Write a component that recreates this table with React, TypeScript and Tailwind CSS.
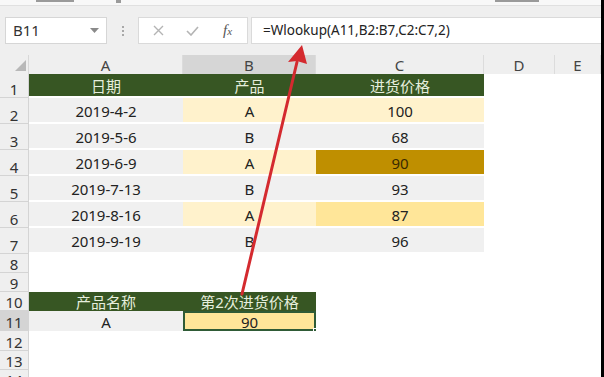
const font = "font-['Noto_Sans','Noto_Sans_CJK_SC',sans-serif]"

type Cell = { text?: string; bg?: string; color?: string }

const G = "bg-[#375623]"
const Y = "bg-[#fff2cc]"
const Y2 = "bg-[#ffe699]"
const GR = "bg-[#f0f0f0]"
const GOLD = "bg-[#bf8f00]"

const cols = [
    { name: "A", w: "w-[154px]" },
    { name: "B", w: "w-[133px]" },
    { name: "C", w: "w-[168px]" },
    { name: "D", w: "w-[71px]" },
    { name: "E", w: "flex-1" },
]

const head = "text-[#e6eedd]"

const rows: { n: number; h: string; gap: boolean; cells: Cell[] }[] = [
    { n: 1, h: "h-[24px]", gap: true, cells: [{ text: "日期", bg: G, color: head }, { text: "产品", bg: G, color: head }, { text: "进货价格", bg: G, color: head }] },
    { n: 2, h: "h-[26px]", gap: true, cells: [{ text: "2019-4-2", bg: GR }, { text: "A", bg: Y }, { text: "100", bg: Y }] },
    { n: 3, h: "h-[26px]", gap: true, cells: [{ text: "2019-5-6", bg: GR }, { text: "B", bg: GR }, { text: "68", bg: GR }] },
    { n: 4, h: "h-[26px]", gap: true, cells: [{ text: "2019-6-9", bg: GR }, { text: "A", bg: Y }, { text: "90", bg: GOLD, color: "text-[#3a2b00]" }] },
    { n: 5, h: "h-[26px]", gap: true, cells: [{ text: "2019-7-13", bg: GR }, { text: "B", bg: GR }, { text: "93", bg: GR }] },
    { n: 6, h: "h-[26px]", gap: true, cells: [{ text: "2019-8-16", bg: GR }, { text: "A", bg: Y }, { text: "87", bg: Y2 }] },
    { n: 7, h: "h-[26px]", gap: true, cells: [{ text: "2019-9-19", bg: GR }, { text: "B", bg: GR }, { text: "96", bg: GR }] },
    { n: 8, h: "h-[19px]", gap: false, cells: [] },
    { n: 9, h: "h-[19px]", gap: false, cells: [] },
    { n: 10, h: "h-[19px]", gap: false, cells: [{ text: "产品名称", bg: G, color: head }, { text: "第2次进货价格", bg: G, color: head }] },
    { n: 11, h: "h-[20px]", gap: false, cells: [{ text: "A", bg: GR }, { text: "90", bg: Y2 }] },
    { n: 12, h: "h-[20px]", gap: false, cells: [] },
    { n: 13, h: "h-[19px]", gap: false, cells: [] },
    { n: 14, h: "h-[19px]", gap: false, cells: [] },
]

const Toolbar = () => (
    <div className="h-[49px] bg-[#efefef] flex items-start pt-[11px] pl-[5px] gap-0">
        <div className="w-[102px] h-[27px] bg-white border border-[#d6d6d6] flex items-center justify-between pl-[7px] pr-[7px]">
            <span className="text-[15px] text-[#333]">B11</span>
            <svg width="9" height="5" viewBox="0 0 9 5"><path d="M0 0h9L4.5 5z" fill="#8a8a8a" /></svg>
        </div>
        <div className="w-[31px] h-[27px] flex flex-col items-center justify-center gap-[2px]">
            <span className="w-[2px] h-[2px] bg-[#a8a8a8]" />
            <span className="w-[2px] h-[2px] bg-[#a8a8a8]" />
            <span className="w-[2px] h-[2px] bg-[#a8a8a8]" />
        </div>
        <div className="w-[110px] h-[27px] bg-white border border-[#dadada] flex items-center">
            <svg className="ml-[14px]" width="11" height="11" viewBox="0 0 11 11"><path d="M1 1l9 9M10 1l-9 9" stroke="#b4b4b4" strokeWidth="1.4" /></svg>
            <svg className="ml-[22px]" width="13" height="10" viewBox="0 0 13 10"><path d="M1 5l4 4 7-8" stroke="#b4b4b4" strokeWidth="1.6" fill="none" /></svg>
            <span className="ml-[24px] font-['Liberation_Serif',serif] italic text-[15px] text-[#555] leading-none">f<span className="text-[11px]">x</span></span>
        </div>
        <div className="ml-[3px] flex-1 h-[27px] bg-white border-y border-l border-[#dadada] flex items-center pl-[11px]">
            <span className="text-[13.5px] text-[#222]">=Wlookup(A11,B2:B7,C2:C7,2)</span>
        </div>
    </div>
)

const ColHeader = () => (
    <div className="flex h-[19px] bg-[#efefef]">
        <div className="w-[29px] relative border-r border-[#d8d8d8]">
            <svg className="absolute left-[15px] top-[5px]" width="11" height="11" viewBox="0 0 11 11"><path d="M11 0v11H0z" fill="#b8b8b8" /></svg>
        </div>
        {cols.map(c => (
            <div key={c.name} className={`${c.w} flex items-end justify-center border-r border-[#dcdcdc] text-[15px] leading-[18px] ${c.name === "B" ? "bg-[#d6d6d6] text-[#444]" : "text-[#444]"}`}>
                {c.name}
            </div>
        ))}
    </div>
)

const Row = ({ r }: { r: (typeof rows)[number] }) => (
    <div className={`flex ${r.h}`}>
        <div className={`w-[29px] shrink-0 border-r border-b border-[#d4d4d4] flex items-end justify-center text-[15px] leading-[16px] text-[#333] ${r.n === 11 ? "bg-[#d4d4d4]" : "bg-[#efefef]"}`}>
            {r.n}
        </div>
        {cols.map((c, i) => {
            const cell = r.cells[i]
            const sel = r.n === 11 && i === 1
            return (
                <div key={c.name} className={`${c.w} h-full ${r.gap ? "pb-[2px]" : ""} relative`}>
                    <div className={`h-full flex items-center justify-center text-[15px] leading-none pt-[2px] ${cell?.bg ?? "bg-white"} ${cell?.color ?? "text-[#222]"} ${sel ? "border-2 border-[#2f5b36]" : ""}`}>
                        {cell?.text}
                    </div>
                    {sel && <div className="absolute right-[-3px] bottom-[-3px] w-[6px] h-[6px] bg-[#2f5b36] border border-white" />}
                </div>
            )
        })}
    </div>
)

export default function App() {
    return (
        <div className={`w-[604px] h-[377px] overflow-hidden flex bg-white ${font}`}>
            <div className="w-[601px] relative">
                <div className="h-[6px] bg-[#f8f8f8] border-b border-[#e0e0e0] flex items-start">
                    <span className="ml-[36px] w-[38px] h-[2px] bg-[#9a9a9a]" />
                    <span className="ml-[42px] w-[5px] h-[3px] bg-[#9a9a9a]" />
                    <span className="ml-[374px] w-[44px] h-[2px] bg-[#9a9a9a]" />
                </div>
                <Toolbar />
                <ColHeader />
                {rows.map(r => <Row key={r.n} r={r} />)}
                <svg className="absolute left-0 top-0 pointer-events-none" width="601" height="377" viewBox="0 0 601 377">
                    <line x1="242" y1="294" x2="297" y2="62" stroke="#d42a2f" strokeWidth="3" strokeLinecap="round" />
                    <path d="M302 45 L307 64 L297 61 L288 62 Z" fill="#d42a2f" />
                </svg>
            </div>
            <div className="w-[3px] bg-black" />
        </div>
    )
}
